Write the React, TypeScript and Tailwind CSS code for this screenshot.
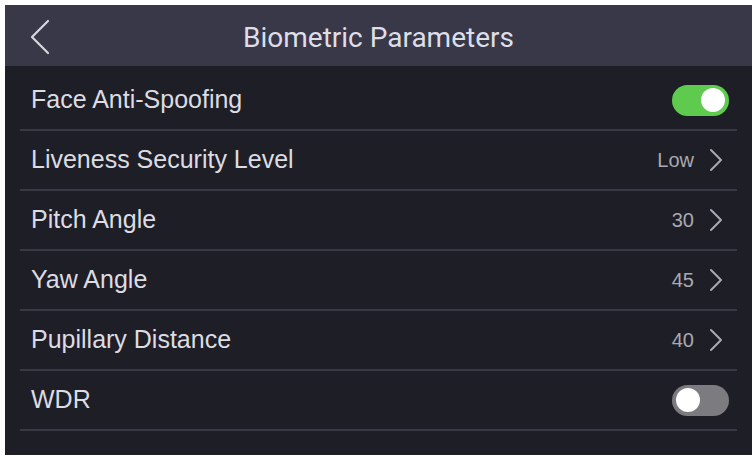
import React, { useState } from 'react'

type Row =
  | { id: string; label: string; kind: 'toggle'; on: boolean }
  | { id: string; label: string; kind: 'value'; value: string }

const ROWS: Row[] = [
  { id: 'spoof', label: 'Face Anti-Spoofing', kind: 'toggle', on: true },
  { id: 'liveness', label: 'Liveness Security Level', kind: 'value', value: 'Low' },
  { id: 'pitch', label: 'Pitch Angle', kind: 'value', value: '30' },
  { id: 'yaw', label: 'Yaw Angle', kind: 'value', value: '45' },
  { id: 'pupil', label: 'Pupillary Distance', kind: 'value', value: '40' },
  { id: 'wdr', label: 'WDR', kind: 'toggle', on: false },
]

function Toggle({ on, onClick }: { on: boolean; onClick: () => void }) {
  return (
    <button
      onClick={onClick}
      className={`flex h-[31px] w-[57px] items-center rounded-full px-[4px] ${on ? 'justify-end bg-[#5fcb4e]' : 'justify-start bg-[#7b7b80]'}`}
    >
      <span className="h-[24px] w-[24px] rounded-full bg-white" />
    </button>
  )
}

function Chevron() {
  return (
    <svg width="14" height="24" viewBox="0 0 14 24" fill="none" className="ml-[15px]">
      <path d="M2 2 L12 12 L2 22" stroke="#a9a9b0" strokeWidth="2" strokeLinecap="round" strokeLinejoin="round" />
    </svg>
  )
}

export default function App() {
  const [toggles, setToggles] = useState<Record<string, boolean>>({ spoof: true, wdr: false })

  return (
    <div className="h-[459px] w-[754px] bg-white pl-[5px] pt-[5px]" style={{ fontFamily: '"Liberation Sans", Arial, sans-serif' }}>
      <div className="flex h-[450px] w-[747px] flex-col bg-[#1e1e27]">
        {/* Header */}
        <div className="relative flex h-[61px] items-center justify-center bg-[#393849] pt-[4px]">
          <svg width="20" height="36" viewBox="0 0 20 36" fill="none" className="absolute left-[25px] top-[14px]">
            <path d="M18 2 L2 18 L18 34" stroke="#d6d6de" strokeWidth="2.2" strokeLinecap="round" strokeLinejoin="round" />
          </svg>
          <h1 className="text-[28px] text-[#dedee6]" style={{ fontFamily: 'Roboto, "Liberation Sans", sans-serif' }}>
            Biometric Parameters
          </h1>
        </div>

        {/* List */}
        <div className="flex flex-col pt-[5px]">
          {ROWS.map((r) => (
            <div key={r.id} className="mx-[15px] flex h-[60px] items-center border-b-2 border-[#3a3a47] pl-[11px] pr-[8px]">
              <span className="flex-1 text-[25px] text-[#dcdce2]">{r.label}</span>
              {r.kind === 'toggle' ? (
                <Toggle on={toggles[r.id]} onClick={() => setToggles((t) => ({ ...t, [r.id]: !t[r.id] }))} />
              ) : (
                <div className="flex items-center pr-[6px]">
                  <span className="text-[20px] text-[#a9a9b0]">{r.value}</span>
                  <Chevron />
                </div>
              )}
            </div>
          ))}
        </div>
      </div>
    </div>
  )
}
